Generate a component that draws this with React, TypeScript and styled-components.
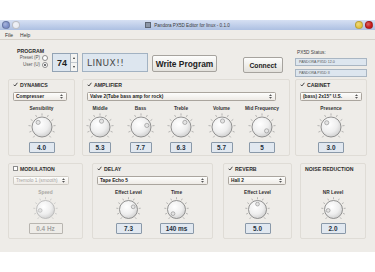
import React from 'react'
import styled, { createGlobalStyle } from 'styled-components'

const GlobalStyle = createGlobalStyle`
  html, body {
    margin: 0;
    padding: 0;
    background: #ffffff;
  }
  body {
    font-family: 'Liberation Sans', Arial, sans-serif;
  }
`

const colors = {
  window: '#eeece8',
  frame: '#dfdcd6',
  text: '#2b2b2b',
  field: '#dde6ef',
  fieldBorder: '#93a3b4',
  valueBg: '#e1e8f0',
  valueBorder: '#8a99a9',
}

const Page = styled.div`
  padding-top: 20px;
  width: 375px;
`

const Window = styled.div`
  width: 375px;
  height: 232px;
  background: ${colors.window};
  display: flex;
  flex-direction: column;
`

const TitleBar = styled.div`
  height: 10px;
  background: linear-gradient(#d6e0f3, #adc0e2);
  display: grid;
  grid-template-columns: 1fr auto 1fr;
  align-items: center;
  padding: 0 2px;
`

const Lights = styled.div<{ $right?: boolean }>`
  display: flex;
  gap: 2px;
  justify-content: ${({ $right }) => ($right ? 'flex-end' : 'flex-start')};
`

const Light = styled.span<{ $color: string }>`
  width: 6px;
  height: 6px;
  border-radius: 50%;
  background: radial-gradient(circle at 35% 35%, #ffffff55, transparent 60%), ${({ $color }) => $color};
  border: 0.5px solid #00000030;
`

const Title = styled.div`
  font-size: 4.6px;
  color: #3a3a3a;
  display: flex;
  align-items: center;
  gap: 3px;
  white-space: nowrap;
`

const TitleIcon = styled.span`
  width: 4px;
  height: 4px;
  background: #8c97a8;
  border: 0.5px solid #5d6674;
`

const MenuBar = styled.div`
  height: 9px;
  border-bottom: 1px solid #d6d2cb;
  display: flex;
  align-items: center;
  gap: 7px;
  padding-left: 5px;
  font-size: 5px;
  color: #333;
`

const TopRow = styled.div`
  height: 39px;
  box-sizing: border-box;
  padding: 8px 0 0 16px;
  display: flex;
  align-items: flex-start;
`

const ProgramBlock = styled.div`
  width: 32px;
  display: flex;
  flex-direction: column;
`

const SectionTitle = styled.div`
  font-size: 5.2px;
  font-weight: 700;
  color: ${colors.text};
  height: 6px;
  line-height: 6px;
  padding-left: 1px;
  white-space: nowrap;
`

const RadioRow = styled.label`
  height: 7px;
  display: flex;
  align-items: center;
  justify-content: flex-end;
  gap: 2px;
  font-size: 4.5px;
  color: #555;
  white-space: nowrap;
`

const Radio = styled.span<{ $on?: boolean }>`
  width: 4px;
  height: 4px;
  border-radius: 50%;
  border: 0.8px solid #8d8d8d;
  background: #fff;
  display: flex;
  align-items: center;
  justify-content: center;
  &::after {
    content: '';
    width: 2px;
    height: 2px;
    border-radius: 50%;
    background: ${({ $on }) => ($on ? '#444' : 'transparent')};
  }
`

const Spin = styled.div`
  margin: 5px 0 0 4px;
  width: 26px;
  height: 19px;
  box-sizing: border-box;
  border: 1px solid ${colors.fieldBorder};
  background: ${colors.field};
  display: flex;
`

const SpinValue = styled.div`
  flex: 1;
  font-size: 9px;
  font-weight: 700;
  color: #222;
  display: flex;
  align-items: center;
  padding-left: 4px;
`

const SpinArrows = styled.div`
  width: 6px;
  border-left: 1px solid #a8b2bc;
  background: #f4f4f2;
  display: flex;
  flex-direction: column;
`

const SpinArrow = styled.div<{ $down?: boolean }>`
  flex: 1;
  display: flex;
  align-items: center;
  justify-content: center;
  border-top: ${({ $down }) => ($down ? '1px solid #c4c9ce' : 'none')};
  &::after {
    content: '';
    border-left: 1.5px solid transparent;
    border-right: 1.5px solid transparent;
    ${({ $down }) => ($down ? 'border-top: 2px solid #333;' : 'border-bottom: 2px solid #333;')}
  }
`

const TextField = styled.div`
  margin: 5px 0 0 4px;
  width: 66px;
  height: 19px;
  box-sizing: border-box;
  border: 1px solid #a2b2c2;
  background: ${colors.field};
  font-family: 'DejaVu Sans', sans-serif;
  font-size: 9px;
  color: #4a4a4a;
  letter-spacing: 0.4px;
  display: flex;
  align-items: center;
  padding-left: 4px;
`

const Button = styled.button<{ $w: number; $h: number; $size: number; $mt: number; $ml: number }>`
  margin: ${({ $mt, $ml }) => `${$mt}px 0 0 ${$ml}px`};
  width: ${({ $w }) => $w}px;
  height: ${({ $h }) => $h}px;
  padding: 0;
  border: 1px solid #a6a39e;
  border-radius: 2px;
  background: linear-gradient(#fdfdfc, #e3e1dc);
  font-family: 'Liberation Sans', Arial, sans-serif;
  font-size: ${({ $size }) => $size}px;
  font-weight: 700;
  color: #222;
  white-space: nowrap;
`

const StatusBlock = styled.div`
  margin: 2px 0 0 12px;
  width: 72px;
  display: flex;
  flex-direction: column;
`

const StatusLabel = styled.div`
  height: 6px;
  line-height: 6px;
  font-size: 4.8px;
  color: #444;
  padding-left: 2px;
`

const StatusField = styled.div<{ $mt: number }>`
  margin-top: ${({ $mt }) => $mt}px;
  height: 8px;
  box-sizing: border-box;
  border: 1px solid #a9b6c3;
  background: ${colors.field};
  font-size: 3.6px;
  color: #555;
  display: flex;
  align-items: center;
  padding-left: 3px;
  white-space: nowrap;
`

const GroupRow = styled.div<{ $h: number; $mt: number }>`
  height: ${({ $h }) => $h}px;
  margin-top: ${({ $mt }) => $mt}px;
  padding-left: 8px;
  display: flex;
`

const Group = styled.div<{ $w: number; $ml: number }>`
  width: ${({ $w }) => $w}px;
  margin-left: ${({ $ml }) => $ml}px;
  box-sizing: border-box;
  border: 1px solid ${colors.frame};
  border-radius: 2px;
  padding: 0 4px;
  display: flex;
  flex-direction: column;
`

const GroupHeader = styled.div`
  height: 9px;
  display: flex;
  align-items: center;
  gap: 2px;
  font-size: 5.2px;
  font-weight: 700;
  color: ${colors.text};
  white-space: nowrap;
`

const CheckBox = styled.span<{ $on: boolean }>`
  width: 5px;
  height: 5px;
  box-sizing: border-box;
  display: flex;
  align-items: center;
  justify-content: center;
  border: ${({ $on }) => ($on ? 'none' : '0.8px solid #8c8c8c')};
  background: ${({ $on }) => ($on ? 'transparent' : '#fff')};
`

const Combo = styled.div<{ $mr: number; $disabled?: boolean }>`
  margin: 3px ${({ $mr }) => $mr}px 0 0;
  height: 9px;
  box-sizing: border-box;
  border: 1px solid ${({ $disabled }) => ($disabled ? '#cfcbc4' : '#aaa59e')};
  border-radius: 1.5px;
  background: linear-gradient(#fdfdfc, #eeebe6);
  display: flex;
  align-items: center;
  justify-content: space-between;
  padding: 0 3px 0 2px;
  font-size: 4.8px;
  font-weight: ${({ $disabled }) => ($disabled ? 400 : 700)};
  color: ${({ $disabled }) => ($disabled ? '#a5a3a0' : '#222')};
  white-space: nowrap;
  overflow: hidden;
`

const ComboSpacer = styled.div`
  margin-top: 3px;
  height: 9px;
`

const KnobRow = styled.div<{ $gap: number; $shift: number; $justify: string }>`
  margin: 5px 0 0 ${({ $shift }) => $shift}px;
  display: flex;
  justify-content: ${({ $justify }) => $justify};
  gap: ${({ $gap }) => $gap}px;
`

const KnobCell = styled.div<{ $w: number }>`
  width: ${({ $w }) => $w}px;
  display: flex;
  flex-direction: column;
  align-items: center;
`

const KnobLabel = styled.div<{ $disabled?: boolean }>`
  height: 6px;
  line-height: 6px;
  font-size: 4.8px;
  font-weight: 700;
  color: ${({ $disabled }) => ($disabled ? '#a9a7a3' : '#333')};
  white-space: nowrap;
`

const ValueBox = styled.div<{ $w: number; $disabled?: boolean }>`
  width: ${({ $w }) => $w}px;
  height: 11px;
  box-sizing: border-box;
  border: 1px solid ${({ $disabled }) => ($disabled ? '#b8b5b0' : colors.valueBorder)};
  border-radius: 1px;
  background: ${({ $disabled }) => ($disabled ? colors.window : colors.valueBg)};
  font-size: 6.4px;
  font-weight: 700;
  color: ${({ $disabled }) => ($disabled ? '#a4a4a4' : '#24303c')};
  display: flex;
  align-items: center;
  justify-content: center;
  white-space: nowrap;
`

const ComboArrows = () => (
  <svg width="3" height="5" viewBox="0 0 3 5">
    <path d="M0 2 L1.5 0.3 L3 2 Z M0 3 L1.5 4.7 L3 3 Z" fill="#555" />
  </svg>
)

const CheckMark = () => (
  <svg width="5" height="5" viewBox="0 0 5 5">
    <path d="M0.6 2.7 L1.9 4 L4.4 0.8" fill="none" stroke="#333" strokeWidth="0.9" />
  </svg>
)

type KnobProps = { angle: number; size: number; disabled?: boolean }

const Knob: React.FC<KnobProps> = ({ angle, size, disabled }) => {
  const id = React.useId().replace(/:/g, '')
  const c = size / 2
  const k = size / 30
  const ticks = []
  for (let i = 0; i < 11; i++) {
    const a = ((-140 + i * 28) * Math.PI) / 180
    const r1 = 11.4 * k
    const r2 = 13.6 * k
    ticks.push(
      <line
        key={i}
        x1={c + r1 * Math.sin(a)}
        y1={c - r1 * Math.cos(a)}
        x2={c + r2 * Math.sin(a)}
        y2={c - r2 * Math.cos(a)}
        stroke={disabled ? '#b9b9b9' : '#8e8e8e'}
        strokeWidth={0.6}
      />
    )
  }
  const a = (angle * Math.PI) / 180
  const d = 6 * k
  return (
    <svg width={size} height={size} viewBox={`0 0 ${size} ${size}`}>
      <defs>
        <radialGradient id={id} cx="40%" cy="35%" r="70%">
          <stop offset="0%" stopColor="#ffffff" />
          <stop offset="60%" stopColor="#eeeeee" />
          <stop offset="100%" stopColor="#cdcdcd" />
        </radialGradient>
      </defs>
      {ticks}
      <circle cx={c} cy={c} r={10 * k} fill={`url(#${id})`} stroke={disabled ? '#b3b3b3' : '#7a7a7a'} strokeWidth={0.8} />
      <circle
        cx={c + d * Math.sin(a)}
        cy={c - d * Math.cos(a)}
        r={2.1 * k}
        fill="#e4e4e4"
        stroke={disabled ? '#b0b0b0' : '#8a8a8a'}
        strokeWidth={0.6}
      />
    </svg>
  )
}

type KnobSpec = { label: string; value: string; angle: number; box: number }

type GroupSpec = {
  title: string
  checked?: boolean
  noCheck?: boolean
  combo?: string
  comboMr?: number
  disabled?: boolean
  width: number
  ml: number
  cellW: number
  gap: number
  shift?: number
  justify?: string
  knobs: KnobSpec[]
}

const Section: React.FC<{ g: GroupSpec; knobSize: number }> = ({ g, knobSize }) => (
  <Group $w={g.width} $ml={g.ml}>
    <GroupHeader>
      {!g.noCheck && <CheckBox $on={!!g.checked}>{g.checked && <CheckMark />}</CheckBox>}
      {g.title}
    </GroupHeader>
    {g.combo ? (
      <Combo $mr={g.comboMr ?? 0} $disabled={g.disabled}>
        <span>{g.combo}</span>
        <ComboArrows />
      </Combo>
    ) : (
      <ComboSpacer />
    )}
    <KnobRow $gap={g.gap} $shift={g.shift ?? 0} $justify={g.justify ?? 'center'}>
      {g.knobs.map((k) => (
        <KnobCell key={k.label + k.value} $w={g.cellW}>
          <KnobLabel $disabled={g.disabled}>{k.label}</KnobLabel>
          <Knob angle={k.angle} size={knobSize} disabled={g.disabled} />
          <ValueBox $w={k.box} $disabled={g.disabled}>{k.value}</ValueBox>
        </KnobCell>
      ))}
    </KnobRow>
  </Group>
)

const upperGroups: GroupSpec[] = [
  {
    title: 'DYNAMICS', checked: true, combo: 'Compresser', comboMr: 3,
    width: 67, ml: 0, cellW: 40, gap: 0,
    knobs: [{ label: 'Sensibility', value: '4.0', angle: -40, box: 26 }],
  },
  {
    title: 'AMPLIFIER', checked: true, combo: 'Valve 2(Tube bass amp for rock)', comboMr: 9,
    width: 208, ml: 7, cellW: 34, gap: 6.5, shift: -4, justify: 'flex-start',
    knobs: [
      { label: 'Middle', value: '5.3', angle: 15, box: 22 },
      { label: 'Bass', value: '7.7', angle: 75, box: 22 },
      { label: 'Treble', value: '6.3', angle: 40, box: 22 },
      { label: 'Volume', value: '5.7', angle: 5, box: 22 },
      { label: 'Mid Frequency', value: '5', angle: 130, box: 26 },
    ],
  },
  {
    title: 'CABINET', checked: true, combo: '(bass) 2x15" U.S.', comboMr: 0,
    width: 72, ml: 5, cellW: 40, gap: 0,
    knobs: [{ label: 'Presence', value: '3.0', angle: -45, box: 26 }],
  },
]

const lowerGroups: GroupSpec[] = [
  {
    title: 'MODULATION', checked: false, combo: 'Tremolo 1 (smooth)', comboMr: 9, disabled: true,
    width: 75, ml: 0, cellW: 40, gap: 0,
    knobs: [{ label: 'Speed', value: '0.4 Hz', angle: -100, box: 34 }],
  },
  {
    title: 'DELAY', checked: true, combo: 'Tape Echo 5', comboMr: 0,
    width: 121, ml: 9, cellW: 44, gap: 4,
    knobs: [
      { label: 'Effect Level', value: '7.3', angle: 60, box: 26 },
      { label: 'Time', value: '140 ms', angle: -140, box: 34 },
    ],
  },
  {
    title: 'REVERB', checked: true, combo: 'Hall 2', comboMr: 1,
    width: 69, ml: 10, cellW: 40, gap: 0,
    knobs: [{ label: 'Effect Level', value: '5.0', angle: 0, box: 26 }],
  },
  {
    title: 'NOISE REDUCTION', noCheck: true,
    width: 66, ml: 8, cellW: 40, gap: 0,
    knobs: [{ label: 'NR Level', value: '2.0', angle: -100, box: 25 }],
  },
]

export default function App() {
  return (
    <Page>
      <GlobalStyle />
      <Window>
        <TitleBar>
          <Lights>
            <Light $color="#7d90c9" />
            <Light $color="#e9ecf3" />
          </Lights>
          <Title>
            <TitleIcon />
            Pandora PX5D Editor for linux - 0.1.0
          </Title>
          <Lights $right>
            <Light $color="#e6c640" />
            <Light $color="#c81c1c" />
          </Lights>
        </TitleBar>
        <MenuBar>
          <span>File</span>
          <span>Help</span>
        </MenuBar>

        <TopRow>
          <ProgramBlock>
            <SectionTitle>PROGRAM</SectionTitle>
            <RadioRow>
              Preset (P) <Radio />
            </RadioRow>
            <RadioRow>
              User (U) <Radio $on />
            </RadioRow>
          </ProgramBlock>
          <Spin>
            <SpinValue>74</SpinValue>
            <SpinArrows>
              <SpinArrow />
              <SpinArrow $down />
            </SpinArrows>
          </Spin>
          <TextField>LINUX!!</TextField>
          <Button $w={65} $h={17} $size={8.4} $mt={7} $ml={4}>Write Program</Button>
          <Button $w={40} $h={16} $size={6.8} $mt={9} $ml={26}>Connect</Button>
          <StatusBlock>
            <StatusLabel>PX5D Status:</StatusLabel>
            <StatusField $mt={2}>PANDORA PX5D 12.0</StatusField>
            <StatusField $mt={3}>PANDORA PX5D II</StatusField>
          </StatusBlock>
        </TopRow>

        <GroupRow $h={77} $mt={0}>
          {upperGroups.map((g) => (
            <Section key={g.title} g={g} knobSize={30} />
          ))}
        </GroupRow>

        <GroupRow $h={76} $mt={7}>
          {lowerGroups.map((g) => (
            <Section key={g.title} g={g} knobSize={27} />
          ))}
        </GroupRow>
      </Window>
    </Page>
  )
}
